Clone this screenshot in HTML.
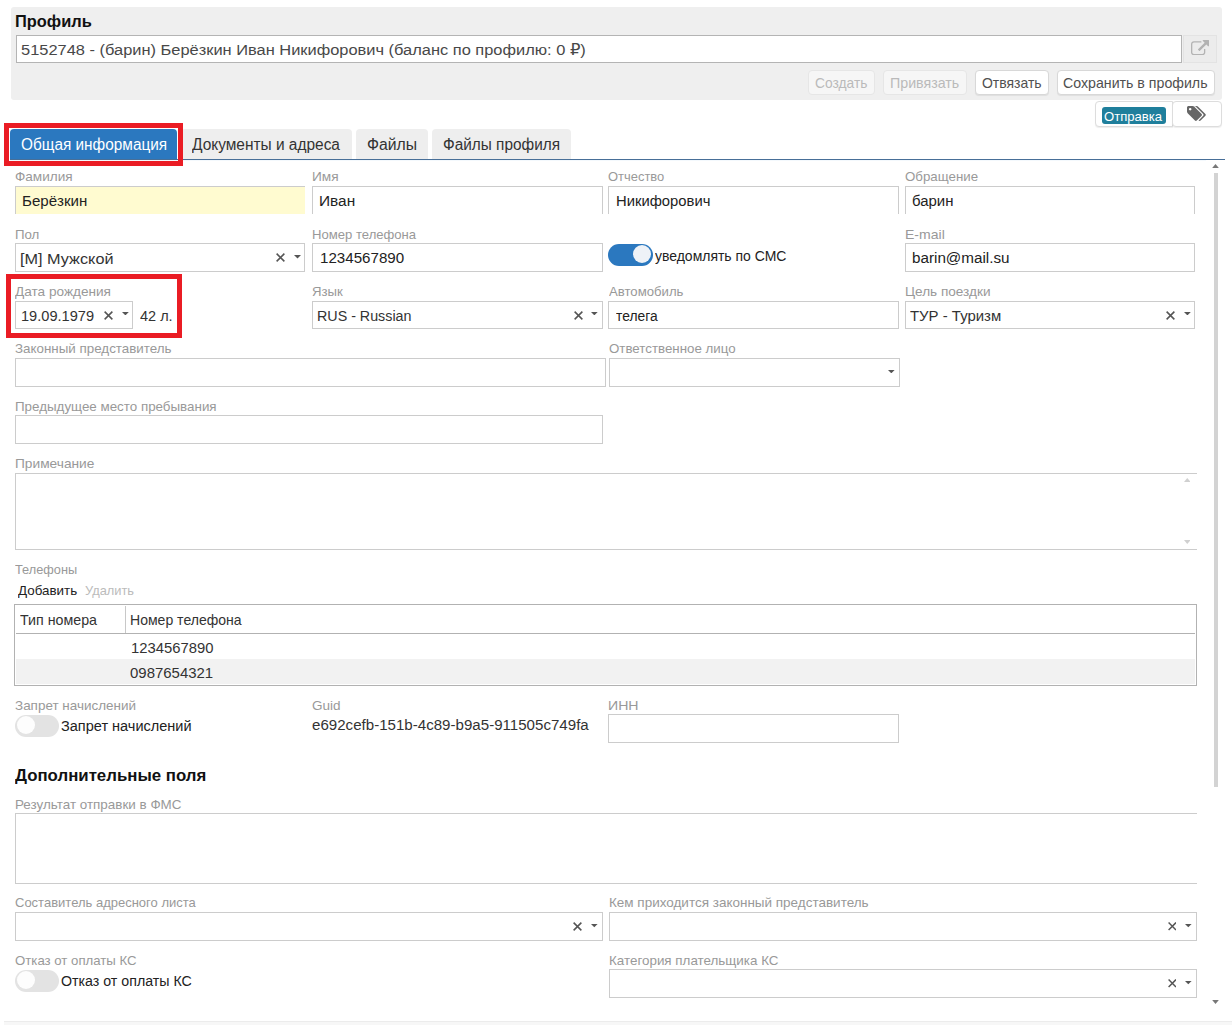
<!DOCTYPE html>
<html lang="ru"><head><meta charset="utf-8"><title>Профиль</title>
<style>
html,body{margin:0;padding:0;background:#fff}
body{width:1232px;height:1025px;position:relative;overflow:hidden;font-family:"Liberation Sans","DejaVu Sans",sans-serif}
.t{position:absolute;white-space:nowrap;line-height:1;transform-origin:0 0;display:block}
.b{position:absolute;box-sizing:border-box}
</style></head><body>
<div class="b" style="left:11px;top:7px;width:1210.5px;height:93px;background:#efefef;border-radius:3px"></div>
<div class="b" style="left:16px;top:35px;width:1166px;height:28px;background:#fff;border:1px solid #b4b4b4"></div>
<div class="b" style="left:1183px;top:35px;width:33.5px;height:28px;background:#ececec;border:1px solid #e3e3e3"></div>
<svg class="b" style="left:1191px;top:39.8px" width="18.2" height="15.3" preserveAspectRatio="none" viewBox="0 0 1792 1536"><path fill="#b3b3b3" d="M1408 800v320q0 119-84.500 203.500T1120 1408H288q-119 0-203.500-84.500T0 1120V288Q0 169 84.500 84.500T288 0h704q14 0 23 9t9 23v64q0 14-9 23t-23 9H288q-66 0-113 47t-47 113v832q0 66 47 113t113 47h832q66 0 113-47t47-113V800q0-14 9-23t23-9h64q14 0 23 9t9 23zm384-864v512q0 26-19 45t-45 19-45-19l-176-176-652 652q-10 10-23 10t-23-10L695 855q-10-10-10-23t10-23l652-652L1171-19q-19-19-19-45t19-45 45-19h512q26 0 45 19t19 45z" transform="translate(0,128)"/></svg>
<div class="b" style="left:808px;top:70px;width:67px;height:25px;background:#f6f6f6;border:1px solid #e6e6e6;border-radius:4px"></div>
<div class="b" style="left:883px;top:70px;width:84px;height:25px;background:#f6f6f6;border:1px solid #e6e6e6;border-radius:4px"></div>
<div class="b" style="left:975px;top:70px;width:73.8px;height:25px;background:#fff;border:1px solid #d8d8d8;border-radius:4px;box-shadow:0 1px 1px rgba(0,0,0,.07)"></div>
<div class="b" style="left:1056.6px;top:70px;width:158.6px;height:25px;background:#fff;border:1px solid #d8d8d8;border-radius:4px;box-shadow:0 1px 1px rgba(0,0,0,.07)"></div>
<div class="b" style="left:1095px;top:101px;width:77.5px;height:25.5px;background:#fff;border:1px solid #ddd;border-radius:4px 0 0 4px;box-shadow:0 1px 1px rgba(0,0,0,.07)"></div>
<div class="b" style="left:1171.5px;top:101px;width:50.5px;height:25.5px;background:#fff;border:1px solid #ddd;border-radius:4px;box-shadow:0 1px 1px rgba(0,0,0,.07)"></div>
<div class="b" style="left:1101.75px;top:107px;width:64.5px;height:17.4px;background:#1f7f9c;border-radius:3px"></div>
<svg class="b" style="left:1186.6px;top:105.8px" width="19" height="15.2" viewBox="0 0 1920 1536"><path fill="#666" d="M448 320q0-53-37.500-90.500T320 192t-90.500 37.500T192 320t37.500 90.500T320 448t90.500-37.500T448 320zm1067 576q0 53-37 90l-491 492q-39 37-91 37-53 0-90-37L91 762q-38-37-64.500-101T0 544V128q0-52 38-90t90-38h416q53 0 117 26.500T763 91l715 714q37 39 37 91zm384 0q0 53-37 90l-491 492q-39 37-91 37-36 0-59-14t-53-45l470-470q37-37 37-90 0-52-37-91L923 91q-38-38-102-64.500T704 0h224q53 0 117 26.500T1147 91l715 714q37 39 37 91z"/></svg>
<div class="b" style="left:10px;top:129px;width:167px;height:31px;background:#2b78bf;border-radius:4px 4px 0 0"></div>
<div class="b" style="left:181px;top:129px;width:171px;height:30.5px;background:#eeeeee;border-radius:4px 4px 0 0"></div>
<div class="b" style="left:356.25px;top:129px;width:71.25px;height:30.5px;background:#eeeeee;border-radius:4px 4px 0 0"></div>
<div class="b" style="left:431.75px;top:129px;width:138.75px;height:30.5px;background:#eeeeee;border-radius:4px 4px 0 0"></div>
<div class="b" style="left:10px;top:159px;width:1215px;height:1px;background:#486f98"></div>
<div class="b" style="left:10px;top:160px;width:1196px;height:1px;background:#f4f9fd"></div>
<div class="b" style="left:15px;top:186px;width:289.5px;height:28px;background:#fffbd0;border:1px solid #ccc;border-bottom:none;border-right:none"></div>
<div class="b" style="left:312px;top:186px;width:291.3px;height:28px;background:#fff;border:1px solid #ccc;border-bottom:none"></div>
<div class="b" style="left:608px;top:186px;width:291.3px;height:28px;background:#fff;border:1px solid #ccc;border-bottom:none"></div>
<div class="b" style="left:905px;top:186px;width:290.3px;height:28px;background:#fff;border:1px solid #ccc;border-bottom:none"></div>
<div class="b" style="left:15px;top:243px;width:290px;height:29px;background:#fff;border:1px solid #ccc"></div>
<div class="b" style="left:312px;top:243px;width:291px;height:29px;background:#fff;border:1px solid #ccc"></div>
<div class="b" style="left:905px;top:243px;width:290px;height:29px;background:#fff;border:1px solid #ccc"></div>
<div class="b" style="left:15px;top:301px;width:118px;height:28px;background:#fff;border:1px solid #ccc"></div>
<div class="b" style="left:312px;top:301px;width:291px;height:28px;background:#fff;border:1px solid #ccc"></div>
<div class="b" style="left:608px;top:301px;width:291px;height:28px;background:#fff;border:1px solid #ccc"></div>
<div class="b" style="left:905px;top:301px;width:290px;height:28px;background:#fff;border:1px solid #ccc"></div>
<div class="b" style="left:15px;top:358px;width:591px;height:29px;background:#fff;border:1px solid #ccc"></div>
<div class="b" style="left:609px;top:358px;width:291px;height:29px;background:#fff;border:1px solid #ccc"></div>
<div class="b" style="left:15px;top:415px;width:588px;height:29px;background:#fff;border:1px solid #ccc"></div>
<div class="b" style="left:15px;top:473px;width:1182px;height:77px;background:#fff;border:1px solid #ccc;border-right:none"></div>
<div class="b" style="left:14px;top:604px;width:1183px;height:82px;background:#fff;border:1px solid #b2b2b2"></div>
<div class="b" style="left:16px;top:659px;width:1179px;height:25px;background:#f2f2f2"></div>
<div class="b" style="left:16px;top:633px;width:1179px;height:1px;background:#b2b2b2"></div>
<div class="b" style="left:125px;top:606px;width:1px;height:27px;background:#c8c8c8"></div>
<div class="b" style="left:608px;top:714px;width:291px;height:29px;background:#fff;border:1px solid #ccc"></div>
<div class="b" style="left:15px;top:813px;width:1182px;height:71px;background:#fff;border:1px solid #ccc;border-right:none"></div>
<div class="b" style="left:15px;top:912px;width:588px;height:29px;background:#fff;border:1px solid #ccc"></div>
<div class="b" style="left:609px;top:912px;width:588px;height:29px;background:#fff;border:1px solid #ccc"></div>
<div class="b" style="left:609px;top:969px;width:588px;height:29px;background:#fff;border:1px solid #ccc"></div>
<div class="b" style="left:608px;top:244px;width:45px;height:22px;background:#2b78bf;border-radius:11px"></div>
<div class="b" style="left:632.5px;top:245px;width:18px;height:18px;background:#eef2f7;border-radius:9px"></div>
<div class="b" style="left:15px;top:715px;width:44px;height:22px;background:#e3e3e3;border-radius:11px"></div>
<div class="b" style="left:17px;top:716px;width:18px;height:18px;background:#fdfdfd;border-radius:9px"></div>
<div class="b" style="left:15px;top:970px;width:44px;height:22px;background:#e3e3e3;border-radius:11px"></div>
<div class="b" style="left:17px;top:971px;width:18px;height:18px;background:#fdfdfd;border-radius:9px"></div>
<svg class="b" style="left:276px;top:253px" width="9" height="9" viewBox="0 0 10 10"><path d="M0.7 0.7 L9.3 9.3 M9.3 0.7 L0.7 9.3" stroke="#555" stroke-width="1.7" fill="none"/></svg>
<svg class="b" style="left:294px;top:255px" width="7" height="3.5" viewBox="0 0 10 5"><path d="M0 0 H10 L5 5 Z" fill="#555"/></svg>
<svg class="b" style="left:104px;top:310.5px" width="9" height="9" viewBox="0 0 10 10"><path d="M0.7 0.7 L9.3 9.3 M9.3 0.7 L0.7 9.3" stroke="#555" stroke-width="1.7" fill="none"/></svg>
<svg class="b" style="left:122px;top:312px" width="6.8" height="3.4" viewBox="0 0 10 5"><path d="M0 0 H10 L5 5 Z" fill="#555"/></svg>
<svg class="b" style="left:573.5px;top:310.5px" width="9" height="9" viewBox="0 0 10 10"><path d="M0.7 0.7 L9.3 9.3 M9.3 0.7 L0.7 9.3" stroke="#555" stroke-width="1.7" fill="none"/></svg>
<svg class="b" style="left:591.3px;top:312px" width="6.7" height="3.35" viewBox="0 0 10 5"><path d="M0 0 H10 L5 5 Z" fill="#555"/></svg>
<svg class="b" style="left:1165.8px;top:310.5px" width="9" height="9" viewBox="0 0 10 10"><path d="M0.7 0.7 L9.3 9.3 M9.3 0.7 L0.7 9.3" stroke="#555" stroke-width="1.7" fill="none"/></svg>
<svg class="b" style="left:1184px;top:312px" width="6.8" height="3.4" viewBox="0 0 10 5"><path d="M0 0 H10 L5 5 Z" fill="#555"/></svg>
<svg class="b" style="left:888px;top:370px" width="6.6" height="3.3" viewBox="0 0 10 5"><path d="M0 0 H10 L5 5 Z" fill="#555"/></svg>
<svg class="b" style="left:573px;top:922px" width="9" height="9" viewBox="0 0 10 10"><path d="M0.7 0.7 L9.3 9.3 M9.3 0.7 L0.7 9.3" stroke="#555" stroke-width="1.7" fill="none"/></svg>
<svg class="b" style="left:591px;top:924.3px" width="6.6" height="3.3" viewBox="0 0 10 5"><path d="M0 0 H10 L5 5 Z" fill="#555"/></svg>
<svg class="b" style="left:1167.6px;top:922.2px" width="8.6" height="8.6" viewBox="0 0 10 10"><path d="M0.7 0.7 L9.3 9.3 M9.3 0.7 L0.7 9.3" stroke="#555" stroke-width="1.7" fill="none"/></svg>
<svg class="b" style="left:1185px;top:924.3px" width="6.6" height="3.3" viewBox="0 0 10 5"><path d="M0 0 H10 L5 5 Z" fill="#555"/></svg>
<svg class="b" style="left:1167.6px;top:979.2px" width="8.6" height="8.6" viewBox="0 0 10 10"><path d="M0.7 0.7 L9.3 9.3 M9.3 0.7 L0.7 9.3" stroke="#555" stroke-width="1.7" fill="none"/></svg>
<svg class="b" style="left:1185px;top:981.3px" width="6.6" height="3.3" viewBox="0 0 10 5"><path d="M0 0 H10 L5 5 Z" fill="#555"/></svg>
<svg class="b" style="left:1183.5px;top:478px" width="6.5" height="4" viewBox="0 0 10 6"><path d="M0 6 L5 0 L10 6 Z" fill="#d0d0d0"/></svg>
<svg class="b" style="left:1183.5px;top:540px" width="6.5" height="4" viewBox="0 0 10 6"><path d="M0 0 L5 6 L10 0 Z" fill="#d0d0d0"/></svg>
<div class="b" style="left:1214.2px;top:173px;width:3.7px;height:614px;background:#d3d3d3"></div>
<svg class="b" style="left:1212px;top:164px" width="7" height="4" viewBox="0 0 10 6"><path d="M0 6 L5 0 L10 6 Z" fill="#777"/></svg>
<svg class="b" style="left:1212px;top:1000px" width="7" height="4" viewBox="0 0 10 6"><path d="M0 0 L5 6 L10 0 Z" fill="#777"/></svg>
<div class="b" style="left:4px;top:1021px;width:1228px;height:1px;background:#ececec"></div>
<div class="b" style="left:4px;top:1022px;width:1228px;height:3px;background:#f7f7f7"></div>
<div class="b" style="left:4px;top:123px;width:179px;height:43px;border:5px solid #ea1c24"></div>
<div class="b" style="left:6px;top:274px;width:176px;height:64px;border:5px solid #ea1c24"></div>
<span class="t" id="t0" style="left:15px;top:13px;font-size:17px;color:#111;transform:scaleX(0.9657);font-weight:700">Профиль</span>
<span class="t" id="t1" style="left:21px;top:42px;font-size:15.5px;color:#484848;transform:scaleX(1.0592)">5152748 - (барин) Берёзкин Иван Никифорович (баланс по профилю: 0 ₽)</span>
<span class="t" id="t2" style="left:815px;top:75px;font-size:15px;color:#bababa;transform:scaleX(0.9199)">Создать</span>
<span class="t" id="t3" style="left:890px;top:75px;font-size:15px;color:#bababa;transform:scaleX(0.9481)">Привязать</span>
<span class="t" id="t4" style="left:982px;top:75px;font-size:15px;color:#505050;transform:scaleX(0.9312)">Отвязать</span>
<span class="t" id="t5" style="left:1063px;top:75px;font-size:15px;color:#505050;transform:scaleX(0.9449)">Сохранить в профиль</span>
<span class="t" id="t6" style="left:1104px;top:110px;font-size:13px;color:#fff;transform:scaleX(1.0081)">Отправка</span>
<span class="t" id="t7" style="left:21px;top:137px;font-size:16px;color:#fff;transform:scaleX(0.9602)">Общая информация</span>
<span class="t" id="t8" style="left:192px;top:137px;font-size:16px;color:#333;transform:scaleX(0.9656)">Документы и адреса</span>
<span class="t" id="t9" style="left:367px;top:137px;font-size:16px;color:#333;transform:scaleX(0.9841)">Файлы</span>
<span class="t" id="t10" style="left:443px;top:137px;font-size:16px;color:#333;transform:scaleX(0.9602)">Файлы профиля</span>
<span class="t" id="t11" style="left:15px;top:170px;font-size:13.5px;color:#999;transform:scaleX(1.0057)">Фамилия</span>
<span class="t" id="t12" style="left:312px;top:170px;font-size:13.5px;color:#999;transform:scaleX(1.0137)">Имя</span>
<span class="t" id="t13" style="left:608px;top:170px;font-size:13.5px;color:#999;transform:scaleX(0.9591)">Отчество</span>
<span class="t" id="t14" style="left:905px;top:170px;font-size:13.5px;color:#999;transform:scaleX(0.9847)">Обращение</span>
<span class="t" id="t15" style="left:15px;top:228px;font-size:13.5px;color:#999;transform:scaleX(0.9822)">Пол</span>
<span class="t" id="t16" style="left:312px;top:228px;font-size:13.5px;color:#999;transform:scaleX(0.9698)">Номер телефона</span>
<span class="t" id="t17" style="left:905px;top:228px;font-size:13.5px;color:#999;transform:scaleX(1.0395)">E-mail</span>
<span class="t" id="t18" style="left:15px;top:285px;font-size:13.5px;color:#999;transform:scaleX(1.0080)">Дата рождения</span>
<span class="t" id="t19" style="left:312px;top:285px;font-size:13.5px;color:#999;transform:scaleX(0.9744)">Язык</span>
<span class="t" id="t20" style="left:609px;top:285px;font-size:13.5px;color:#999;transform:scaleX(0.9742)">Автомобиль</span>
<span class="t" id="t21" style="left:905px;top:285px;font-size:13.5px;color:#999;transform:scaleX(1.0067)">Цель поездки</span>
<span class="t" id="t22" style="left:15px;top:342px;font-size:13.5px;color:#999;transform:scaleX(0.9906)">Законный представитель</span>
<span class="t" id="t23" style="left:609px;top:342px;font-size:13.5px;color:#999;transform:scaleX(0.9851)">Ответственное лицо</span>
<span class="t" id="t24" style="left:15px;top:400px;font-size:13.5px;color:#999;transform:scaleX(0.9900)">Предыдущее место пребывания</span>
<span class="t" id="t25" style="left:15px;top:457px;font-size:13.5px;color:#999;transform:scaleX(1.0157)">Примечание</span>
<span class="t" id="t26" style="left:15px;top:563px;font-size:13.5px;color:#999;transform:scaleX(0.9450)">Телефоны</span>
<span class="t" id="t27" style="left:15px;top:699px;font-size:13.5px;color:#999;transform:scaleX(0.9969)">Запрет начислений</span>
<span class="t" id="t28" style="left:312px;top:699px;font-size:13.5px;color:#999;transform:scaleX(1.0028)">Guid</span>
<span class="t" id="t29" style="left:608px;top:699px;font-size:13.5px;color:#999;transform:scaleX(1.0460)">ИНН</span>
<span class="t" id="t30" style="left:15px;top:798px;font-size:13.5px;color:#999;transform:scaleX(0.9943)">Результат отправки в ФМС</span>
<span class="t" id="t31" style="left:15px;top:896px;font-size:13.5px;color:#999;transform:scaleX(0.9630)">Составитель адресного листа</span>
<span class="t" id="t32" style="left:609px;top:896px;font-size:13.5px;color:#999;transform:scaleX(0.9988)">Кем приходится законный представитель</span>
<span class="t" id="t33" style="left:15px;top:954px;font-size:13.5px;color:#999;transform:scaleX(0.9777)">Отказ от оплаты КС</span>
<span class="t" id="t34" style="left:609px;top:954px;font-size:13.5px;color:#999;transform:scaleX(0.9922)">Категория плательщика КС</span>
<span class="t" id="t35" style="left:22px;top:193px;font-size:15.5px;color:#222;transform:scaleX(0.9723)">Берёзкин</span>
<span class="t" id="t36" style="left:319px;top:193px;font-size:15.5px;color:#222;transform:scaleX(0.9938)">Иван</span>
<span class="t" id="t37" style="left:616px;top:193px;font-size:15.5px;color:#222;transform:scaleX(0.9542)">Никифорович</span>
<span class="t" id="t38" style="left:912px;top:193px;font-size:15.5px;color:#222;transform:scaleX(0.9644)">барин</span>
<span class="t" id="t39" style="left:20px;top:251px;font-size:15.5px;color:#333;transform:scaleX(1.0483)">[М] Мужской</span>
<span class="t" id="t40" style="left:320px;top:250px;font-size:15.5px;color:#222;transform:scaleX(0.9766)">1234567890</span>
<span class="t" id="t41" style="left:655px;top:248px;font-size:15.5px;color:#222;transform:scaleX(0.9011)">уведомлять по СМС</span>
<span class="t" id="t42" style="left:912px;top:250px;font-size:15.5px;color:#222;transform:scaleX(0.9820)">barin@mail.su</span>
<span class="t" id="t43" style="left:21px;top:308px;font-size:15.5px;color:#333;transform:scaleX(0.9417)">19.09.1979</span>
<span class="t" id="t44" style="left:140px;top:308px;font-size:15.5px;color:#333;transform:scaleX(0.9348)">42 л.</span>
<span class="t" id="t45" style="left:317px;top:308px;font-size:15.5px;color:#333;transform:scaleX(0.9217)">RUS - Russian</span>
<span class="t" id="t46" style="left:616px;top:308px;font-size:15.5px;color:#222;transform:scaleX(0.8915)">телега</span>
<span class="t" id="t47" style="left:910px;top:308px;font-size:15.5px;color:#333;transform:scaleX(0.9635)">ТУР - Туризм</span>
<span class="t" id="t48" style="left:18px;top:584px;font-size:13.5px;color:#222;transform:scaleX(0.9909)">Добавить</span>
<span class="t" id="t49" style="left:85px;top:584px;font-size:13.5px;color:#bbb;transform:scaleX(0.9518)">Удалить</span>
<span class="t" id="t50" style="left:20px;top:612px;font-size:15px;color:#333;transform:scaleX(0.9488)">Тип номера</span>
<span class="t" id="t51" style="left:130px;top:612px;font-size:15px;color:#333;transform:scaleX(0.9358)">Номер телефона</span>
<span class="t" id="t52" style="left:131px;top:640px;font-size:15px;color:#333;transform:scaleX(0.9877)">1234567890</span>
<span class="t" id="t53" style="left:130px;top:665px;font-size:15px;color:#333;transform:scaleX(0.9970)">0987654321</span>
<span class="t" id="t54" style="left:61px;top:718px;font-size:15.5px;color:#222;transform:scaleX(0.9369)">Запрет начислений</span>
<span class="t" id="t55" style="left:312px;top:717px;font-size:15.5px;color:#333;transform:scaleX(0.9741)">e692cefb-151b-4c89-b9a5-911505c749fa</span>
<span class="t" id="t56" style="left:15px;top:767px;font-size:17px;color:#111;transform:scaleX(0.9890);font-weight:700">Дополнительные поля</span>
<span class="t" id="t57" style="left:61px;top:973px;font-size:15.5px;color:#222;transform:scaleX(0.9165)">Отказ от оплаты КС</span>
</body></html>
